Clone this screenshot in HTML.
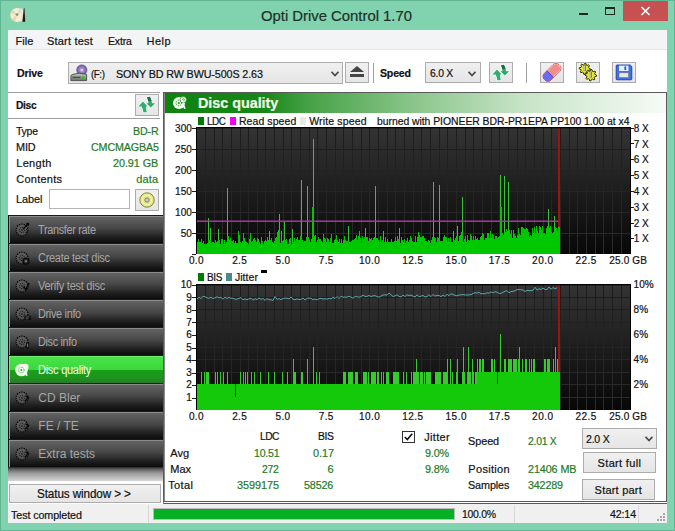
<!DOCTYPE html>
<html><head><meta charset="utf-8">
<style>
*{margin:0;padding:0;box-sizing:border-box}
html,body{width:675px;height:531px;overflow:hidden}
body{position:relative;background:#80d3ae;font-family:"Liberation Sans",sans-serif;font-size:11.5px;color:#111}
.a{position:absolute}
.t{position:absolute;white-space:nowrap;line-height:1;-webkit-text-stroke:0.2px currentColor}
.btn{position:absolute;background:linear-gradient(#f0f0f0,#e5e5e5);border:1px solid #acacac}
.combo{position:absolute;background:linear-gradient(#f0f0f0,#e5e5e5);border:1px solid #acacac}
.nav{position:absolute;left:8px;width:155px;height:28px;border-top:1px solid #1a1a1a;border-left:1px solid #111;
 background:linear-gradient(#8c8c8c 0,#8c8c8c 1px,#636363 1px,#474747 45%,#1e1e1e 80%,#0c0c0c 100%)}
.nav::before{content:"";position:absolute;left:0;top:0;width:1px;height:27px;background:#9a9a9a}
.nav.sel{background:linear-gradient(#6ef06e 0,#6ef06e 1px,#4ae24a 1px,#3cd83c 50%,#1aa01a 50%,#1c961c 80%,#287a28 100%)}
.nav.sel::before{background:#7ae87a}
</style></head><body>
<div class="a" style="left:0;top:0;width:675px;height:531px;border:1px solid #62b592"></div>

<!-- title icon -->
<svg class="a" style="left:0;top:0" width="30" height="26" viewBox="0 0 30 26">
<defs><linearGradient id="wedge" x1="0" y1="0" x2="0" y2="1"><stop offset="0" stop-color="#4a6a58"/><stop offset="0.5" stop-color="#3a2418"/><stop offset="1" stop-color="#1a0a08"/></linearGradient></defs>
<circle cx="17.3" cy="15" r="7" fill="#f6ecd0"/>
<path d="M17.3 15 L10.6 13 A7 7 0 0 1 12.5 9.6 Z M17.3 15 L19.5 8.4 A7 7 0 0 1 23 10.5 Z M17.3 15 L15 21.6 A7 7 0 0 1 11.4 19 Z" fill="#e6d6ac"/>
<path d="M20.2 8.6 L23.4 8.4 L22.6 21.6 L20.4 21.4 Z" fill="#e4e8e4" opacity="0.85"/>
<path d="M23.6 8.2 L24.8 8 L25.2 21.8 L22.4 21.8 L22.9 16 Z" fill="url(#wedge)"/>
<circle cx="17" cy="14.6" r="1.4" fill="#7a9a98"/>
</svg>
<div class="a" style="left:579px;top:13px;width:9px;height:2px;background:#1a2a22"></div>
<div class="a" style="left:605px;top:7px;width:10px;height:8px;border:1px solid #1a2a22;border-top-width:2px"></div>
<div class="a" style="left:623px;top:1px;width:45px;height:20px;background:#c75050"></div>
<svg class="a" style="left:640px;top:6px" width="11" height="10"><path d="M1.5 1 L9.5 9 M9.5 1 L1.5 9" stroke="#fff" stroke-width="1.6"/></svg>

<!-- client -->
<div class="a" style="left:8px;top:30px;width:659px;height:493px;background:#fff"></div>
<div class="a" style="left:8px;top:30px;width:659px;height:20px;background:#f3f4f5;border-bottom:1px solid #e6e6e6"></div>

<!-- toolbar -->
<div class="combo" style="left:68px;top:62px;width:275px;height:22px"></div>
<svg class="a" style="left:66px;top:60px" width="24" height="26" viewBox="66 60 24 26">
<defs><radialGradient id="pd" cx="0.5" cy="0.5" r="0.5"><stop offset="0" stop-color="#f4f0ff"/><stop offset="0.35" stop-color="#a890d0"/><stop offset="1" stop-color="#6a5498"/></radialGradient>
<linearGradient id="drv" x1="0" y1="0" x2="0" y2="1"><stop offset="0" stop-color="#c8ccc8"/><stop offset="1" stop-color="#6a706a"/></linearGradient></defs>
<circle cx="81.8" cy="70" r="5.2" fill="url(#pd)" stroke="#5a4a80" stroke-width="0.5"/>
<path d="M73 74.3 L79 73.2 L86.6 74.3 L86.6 80.6 L70.9 80.6 L70.9 75.5 Z" fill="url(#drv)" stroke="#3a3e3a" stroke-width="0.8"/>
<rect x="72.5" y="76.6" width="8" height="1.6" fill="#505450"/>
<circle cx="83.3" cy="77.4" r="1.5" fill="#30c030"/>
</svg>
<svg class="a" style="left:331px;top:71px" width="8" height="6"><path d="M0.5 0.8 L4 4.5 L7.5 0.8" fill="none" stroke="#4a4a4a" stroke-width="1.8"/></svg>
<div class="btn" style="left:345px;top:62px;width:24px;height:21px"></div>
<svg class="a" style="left:349px;top:65px" width="16" height="14"><path d="M1 7 L8 1 L15 7 Z" fill="#444"/><rect x="1" y="9" width="14" height="3" fill="#444"/></svg>
<div class="a" style="left:373px;top:63px;width:1px;height:20px;background:#a0a0a0"></div>
<div class="combo" style="left:425px;top:62px;width:56px;height:21px"></div>
<svg class="a" style="left:468px;top:71px" width="8" height="6"><path d="M0.5 0.8 L4 4.5 L7.5 0.8" fill="none" stroke="#4a4a4a" stroke-width="1.8"/></svg>
<div class="btn" style="left:489px;top:62px;width:24px;height:21px"></div>
<svg class="a" style="left:489px;top:62px" width="24" height="21" viewBox="489 62 24 21">
<g stroke="#f4fff8" stroke-width="1.4" stroke-linejoin="round" paint-order="stroke">
<path d="M492.4,74.4 L497,69.4 L501.6,74.4 L499.9,74.4 C500.1,76.5 500.5,78.3 500.7,80.3 L497.3,80.3 C497.1,78.2 496.6,76.2 495.6,74.4 Z" fill="#2fae6c"/>
<path d="M500.4,71.2 L502.5,71.2 C502.5,69 501.9,67 500.9,65.4 L503.7,64.7 C505.1,66.6 505.8,69 505.9,71.2 L509.2,71.2 L504.8,75.6 Z" fill="#2fa868"/>
</g>
<path d="M500.9,65.4 L503.7,64.7 C504.6,66 505.2,67.5 505.5,69 L502.4,69.2 C502.2,67.8 501.7,66.5 500.9,65.4Z" fill="#1e6a44"/>
</svg>
<div class="a" style="left:526px;top:63px;width:1px;height:20px;background:#a0a0a0"></div>
<div class="btn" style="left:540px;top:62px;width:24px;height:21px"></div>
<svg class="a" style="left:540px;top:62px" width="24" height="21" viewBox="540 62 24 21">
<g transform="rotate(-45 552 72.4)">
<rect x="541.5" y="67.6" width="21" height="9.6" rx="4.2" fill="#f48a8a" stroke="#fff" stroke-width="1.6"/>
<path d="M545.7,67.6 H549.5 V77.2 H545.7 A4.2 4.2 0 0 1 541.5 73 V71.8 A4.2 4.2 0 0 1 545.7 67.6Z" fill="#6a6af8"/>
<rect x="541.5" y="67.6" width="21" height="9.6" rx="4.2" fill="none" stroke="#c84848" stroke-width="0.8"/>
<path d="M549.5 67.6 V77.2" stroke="#4040b0" stroke-width="0.8"/>
</g>
</svg>
<div class="btn" style="left:576px;top:62px;width:24px;height:21px"></div>
<svg class="a" style="left:576px;top:62px" width="24" height="21" viewBox="576 62 24 21">
<g stroke="#fffff0" stroke-width="1.6" stroke-linejoin="round" paint-order="stroke" fill="none">
<path d="M584.80,63.20 L585.89,63.31 L586.34,65.07 L587.04,65.45 L588.76,64.84 L589.46,65.69 L588.53,67.26 L588.75,68.01 L590.40,68.80 L590.29,69.89 L588.53,70.34 L588.15,71.04 L588.76,72.76 L587.91,73.46 L586.34,72.53 L585.59,72.75 L584.80,74.40 L583.71,74.29 L583.26,72.53 L582.56,72.15 L580.84,72.76 L580.14,71.91 L581.07,70.34 L580.85,69.59 L579.20,68.80 L579.31,67.71 L581.07,67.26 L581.45,66.56 L580.84,64.84 L581.69,64.14 L583.26,65.07 L584.01,64.85Z"/><path d="M590.80,69.40 L591.93,69.51 L592.40,71.34 L593.12,71.73 L594.90,71.10 L595.62,71.98 L594.66,73.60 L594.90,74.39 L596.60,75.20 L596.49,76.33 L594.66,76.80 L594.27,77.52 L594.90,79.30 L594.02,80.02 L592.40,79.06 L591.61,79.30 L590.80,81.00 L589.67,80.89 L589.20,79.06 L588.48,78.67 L586.70,79.30 L585.98,78.42 L586.94,76.80 L586.70,76.01 L585.00,75.20 L585.11,74.07 L586.94,73.60 L587.33,72.88 L586.70,71.10 L587.58,70.38 L589.20,71.34 L589.99,71.10Z"/></g>
<path d="M584.80,63.20 L585.89,63.31 L586.34,65.07 L587.04,65.45 L588.76,64.84 L589.46,65.69 L588.53,67.26 L588.75,68.01 L590.40,68.80 L590.29,69.89 L588.53,70.34 L588.15,71.04 L588.76,72.76 L587.91,73.46 L586.34,72.53 L585.59,72.75 L584.80,74.40 L583.71,74.29 L583.26,72.53 L582.56,72.15 L580.84,72.76 L580.14,71.91 L581.07,70.34 L580.85,69.59 L579.20,68.80 L579.31,67.71 L581.07,67.26 L581.45,66.56 L580.84,64.84 L581.69,64.14 L583.26,65.07 L584.01,64.85Z" fill="#e8e824" stroke="#2a2a08" stroke-width="1" stroke-linejoin="round"/>
<path d="M590.80,69.40 L591.93,69.51 L592.40,71.34 L593.12,71.73 L594.90,71.10 L595.62,71.98 L594.66,73.60 L594.90,74.39 L596.60,75.20 L596.49,76.33 L594.66,76.80 L594.27,77.52 L594.90,79.30 L594.02,80.02 L592.40,79.06 L591.61,79.30 L590.80,81.00 L589.67,80.89 L589.20,79.06 L588.48,78.67 L586.70,79.30 L585.98,78.42 L586.94,76.80 L586.70,76.01 L585.00,75.20 L585.11,74.07 L586.94,73.60 L587.33,72.88 L586.70,71.10 L587.58,70.38 L589.20,71.34 L589.99,71.10Z" fill="#e8e824" stroke="#2a2a08" stroke-width="1" stroke-linejoin="round"/>
<rect x="583.7" y="65" width="2.2" height="6" fill="#7a7a6a"/><rect x="584.2" y="65.5" width="0.8" height="5" fill="#d8d8d0"/>
<rect x="589.8" y="71.6" width="2.2" height="6" fill="#7a7a6a"/><rect x="590.3" y="72.1" width="0.8" height="5" fill="#d8d8d0"/>
</svg>
<div class="btn" style="left:612px;top:62px;width:24px;height:21px"></div>
<svg class="a" style="left:612px;top:62px" width="24" height="21" viewBox="612 62 24 21">
<path d="M616.2,65.6 Q616.2,65 617,65 L630.2,65 L631.8,66.6 L631.8,79 Q631.8,79.8 631,79.8 L617,79.8 Q616.2,79.8 616.2,79 Z" fill="#3c72e4" stroke="#1c3ca8" stroke-width="0.9"/>
<rect x="619" y="65.6" width="9.5" height="5.4" fill="#e6f2ff"/>
<rect x="624.4" y="66.4" width="1.8" height="3.6" fill="#2a5ad0"/>
<rect x="619" y="72.8" width="9.6" height="4.8" fill="#e8e8e8" stroke="#707070" stroke-width="0.6"/>
</svg>
<!-- left panel -->
<div class="a" style="left:8px;top:92px;width:152px;height:1px;background:#a0a0a0"></div>
<div class="a" style="left:8px;top:118px;width:152px;height:1px;background:#a0a0a0"></div>
<div class="btn" style="left:135px;top:94px;width:24px;height:22px"></div>
<svg class="a" style="left:135px;top:94px" width="24" height="21" viewBox="489 62 24 21">
<g stroke="#f4fff8" stroke-width="1.4" stroke-linejoin="round" paint-order="stroke">
<path d="M492.4,74.4 L497,69.4 L501.6,74.4 L499.9,74.4 C500.1,76.5 500.5,78.3 500.7,80.3 L497.3,80.3 C497.1,78.2 496.6,76.2 495.6,74.4 Z" fill="#2fae6c"/>
<path d="M500.4,71.2 L502.5,71.2 C502.5,69 501.9,67 500.9,65.4 L503.7,64.7 C505.1,66.6 505.8,69 505.9,71.2 L509.2,71.2 L504.8,75.6 Z" fill="#2fa868"/>
</g>
<path d="M500.9,65.4 L503.7,64.7 C504.6,66 505.2,67.5 505.5,69 L502.4,69.2 C502.2,67.8 501.7,66.5 500.9,65.4Z" fill="#1e6a44"/>
</svg>
<div class="a" style="left:49px;top:189px;width:81px;height:20px;border:1px solid #b4b4b4;background:#fff"></div>
<div class="btn" style="left:135px;top:189px;width:24px;height:22px"></div>
<svg class="a" style="left:135px;top:189px" width="24" height="22" viewBox="0 0 24 22">
<circle cx="12" cy="11" r="7.2" fill="#e6e68a" stroke="#7a7a30" stroke-width="0.9"/>
<circle cx="12" cy="11" r="4.8" fill="none" stroke="#f8f8c0" stroke-width="1"/>
<circle cx="12" cy="11" r="2.2" fill="#c8c8b8" stroke="#6a6a50" stroke-width="0.7"/>
</svg>
<!-- nav -->
<div class="a" style="left:8px;top:467px;width:155px;height:14px;background:linear-gradient(#262626 0,#5a5a5a 2px,#9a9a9a 6px,#d4d4d4 100%)"></div>
<div class="nav" style="top:215px"></div>
<svg class="a" style="left:12px;top:221px" width="20" height="18" viewBox="0 0 20 18"><circle cx="10" cy="9" r="5.9" fill="#6a6a6a" fill-opacity="0.55" stroke="#080808" stroke-width="1.4" stroke-dasharray="1.3 1.1"/><circle cx="10" cy="9" r="2.6" fill="none" stroke="#101010" stroke-width="1" stroke-dasharray="1.1 0.9"/><circle cx="10" cy="9" r="0.8" fill="#101010"/><path d="M11 8 L16.5 2.5 M14.3 2.6 L16.5 2.5 L16.4 4.7" stroke="#080808" stroke-width="1.3" fill="none"/><path d="M14 9 L16 7 M13.5 12 L15.5 10" stroke="#080808" stroke-width="1"/></svg>
<div class="t" style="left:38.30px;top:224.00px;font-size:12px;color:#a6a6a6;letter-spacing:-0.375px;transform:scaleX(0.9100);transform-origin:0 0;-webkit-text-stroke:0;">Transfer rate</div>
<div class="nav" style="top:243px"></div>
<svg class="a" style="left:12px;top:249px" width="20" height="18" viewBox="0 0 20 18"><circle cx="10" cy="9" r="5.9" fill="#6a6a6a" fill-opacity="0.55" stroke="#080808" stroke-width="1.4" stroke-dasharray="1.3 1.1"/><circle cx="10" cy="9" r="2.6" fill="none" stroke="#101010" stroke-width="1" stroke-dasharray="1.1 0.9"/><circle cx="10" cy="9" r="0.8" fill="#101010"/><circle cx="14" cy="12.2" r="3" fill="#2a2a2a" stroke="#080808" stroke-width="1.2"/><path d="M12.8 12.2 H15.2 M14 11 V13.4" stroke="#8a8a8a" stroke-width="0.8"/></svg>
<div class="t" style="left:38.30px;top:252.00px;font-size:12px;color:#a6a6a6;letter-spacing:-0.329px;transform:scaleX(0.9183);transform-origin:0 0;-webkit-text-stroke:0;">Create test disc</div>
<div class="nav" style="top:271px"></div>
<svg class="a" style="left:12px;top:277px" width="20" height="18" viewBox="0 0 20 18"><circle cx="10" cy="9" r="5.9" fill="#6a6a6a" fill-opacity="0.55" stroke="#080808" stroke-width="1.4" stroke-dasharray="1.3 1.1"/><circle cx="10" cy="9" r="2.6" fill="none" stroke="#101010" stroke-width="1" stroke-dasharray="1.1 0.9"/><circle cx="10" cy="9" r="0.8" fill="#101010"/><path d="M11.5 9.5 L13.8 12.5 L17 6" stroke="#080808" stroke-width="1.5" fill="none"/></svg>
<div class="t" style="left:38.30px;top:280.00px;font-size:12px;color:#a6a6a6;letter-spacing:-0.294px;transform:scaleX(0.9213);transform-origin:0 0;-webkit-text-stroke:0;">Verify test disc</div>
<div class="nav" style="top:299px"></div>
<svg class="a" style="left:12px;top:305px" width="20" height="18" viewBox="0 0 20 18"><circle cx="10" cy="9" r="5.9" fill="#6a6a6a" fill-opacity="0.55" stroke="#080808" stroke-width="1.4" stroke-dasharray="1.3 1.1"/><circle cx="10" cy="9" r="2.6" fill="none" stroke="#101010" stroke-width="1" stroke-dasharray="1.1 0.9"/><circle cx="10" cy="9" r="0.8" fill="#101010"/><rect x="12.4" y="10.6" width="6.4" height="4.4" fill="#080808"/><path d="M13.6 12 H17.6 M13.6 13.8 H16.6" stroke="#8a8a8a" stroke-width="0.7"/></svg>
<div class="t" style="left:38.30px;top:308.00px;font-size:12px;color:#a6a6a6;letter-spacing:-0.365px;transform:scaleX(0.9114);transform-origin:0 0;-webkit-text-stroke:0;">Drive info</div>
<div class="nav" style="top:327px"></div>
<svg class="a" style="left:12px;top:333px" width="20" height="18" viewBox="0 0 20 18"><circle cx="10" cy="9" r="5.9" fill="#6a6a6a" fill-opacity="0.55" stroke="#080808" stroke-width="1.4" stroke-dasharray="1.3 1.1"/><circle cx="10" cy="9" r="2.6" fill="none" stroke="#101010" stroke-width="1" stroke-dasharray="1.1 0.9"/><circle cx="10" cy="9" r="0.8" fill="#101010"/><rect x="14.2" y="9.4" width="2.8" height="6" fill="#080808"/><rect x="15.1" y="10.6" width="1" height="3.6" fill="#8a8a8a"/></svg>
<div class="t" style="left:38.30px;top:336.00px;font-size:12px;color:#a6a6a6;letter-spacing:-0.380px;transform:scaleX(0.9098);transform-origin:0 0;-webkit-text-stroke:0;">Disc info</div>
<div class="nav sel" style="top:355px"></div>
<svg class="a" style="left:12px;top:361px" width="20" height="18" viewBox="0 0 20 18"><circle cx="9.5" cy="9" r="6.3" fill="#f4fff0"/><circle cx="13.4" cy="6" r="3.2" fill="#f4fff0"/><path d="M13.5 9 L15.8 14.6 L14 15 L12 9.5Z" fill="#f4fff0"/><circle cx="9.3" cy="9" r="2.8" fill="none" stroke="#2aa82a" stroke-width="0.9" stroke-dasharray="1.2 0.8"/><circle cx="9.3" cy="9" r="1" fill="#2aa82a"/></svg>
<div class="t" style="left:38.30px;top:364.00px;font-size:12px;color:#f4ffe8;letter-spacing:-0.314px;transform:scaleX(0.9222);transform-origin:0 0;-webkit-text-stroke:0;">Disc quality</div>
<div class="nav" style="top:383px"></div>
<svg class="a" style="left:12px;top:389px" width="20" height="18" viewBox="0 0 20 18"><circle cx="10" cy="9" r="5.9" fill="#6a6a6a" fill-opacity="0.55" stroke="#080808" stroke-width="1.4" stroke-dasharray="1.3 1.1"/><circle cx="10" cy="9" r="2.6" fill="none" stroke="#101010" stroke-width="1" stroke-dasharray="1.1 0.9"/><circle cx="10" cy="9" r="0.8" fill="#101010"/><path d="M12.5 12.5 L17 8 M13.5 6.5 L16.5 9.5" stroke="#080808" stroke-width="1.3"/></svg>
<div class="t" style="left:38.30px;top:392.00px;font-size:12px;color:#a6a6a6;-webkit-text-stroke:0;">CD Bler</div>
<div class="nav" style="top:411px"></div>
<svg class="a" style="left:12px;top:417px" width="20" height="18" viewBox="0 0 20 18"><circle cx="10" cy="9" r="5.9" fill="#6a6a6a" fill-opacity="0.55" stroke="#080808" stroke-width="1.4" stroke-dasharray="1.3 1.1"/><circle cx="10" cy="9" r="2.6" fill="none" stroke="#101010" stroke-width="1" stroke-dasharray="1.1 0.9"/><circle cx="10" cy="9" r="0.8" fill="#101010"/><path d="M12.5 12.5 L17 8 M13.5 6.5 L16.5 9.5" stroke="#080808" stroke-width="1.3"/></svg>
<div class="t" style="left:38.30px;top:420.00px;font-size:12px;color:#a6a6a6;-webkit-text-stroke:0;">FE / TE</div>
<div class="nav" style="top:439px"></div>
<svg class="a" style="left:12px;top:445px" width="20" height="18" viewBox="0 0 20 18"><circle cx="10" cy="9" r="5.9" fill="#6a6a6a" fill-opacity="0.55" stroke="#080808" stroke-width="1.4" stroke-dasharray="1.3 1.1"/><circle cx="10" cy="9" r="2.6" fill="none" stroke="#101010" stroke-width="1" stroke-dasharray="1.1 0.9"/><circle cx="10" cy="9" r="0.8" fill="#101010"/><path d="M12.5 12.5 L17 8 M13.5 6.5 L16.5 9.5" stroke="#080808" stroke-width="1.3"/></svg>
<div class="t" style="left:38.30px;top:448.00px;font-size:12px;color:#a6a6a6;-webkit-text-stroke:0;">Extra tests</div>

<div class="btn" style="left:9px;top:484px;width:152px;height:19px"></div>

<!-- right panel -->
<div class="a" style="left:163px;top:92px;width:504px;height:412px;background:#fff;border-left:1px solid #8a8a8a;border-bottom:1px solid #5a5a5a"></div>
<div class="a" style="left:163px;top:92px;width:504px;height:410px;border-left:1px solid #5a5a5a;border-top:1px solid #5a5a5a;border-right:1px solid #5a5a5a;border-bottom:1px solid #5a5a5a"></div>
<div class="a" style="left:164px;top:93px;width:1px;height:408px;background:#8a8a8a"></div>
<div class="a" style="left:165px;top:93px;width:501px;height:20px;background:linear-gradient(90deg,#0e820f 0%,#168818 20%,#44a044 28%,#8cc68c 50%,#c8e4c8 72%,#f6fbf6 100%)"></div>
<svg class="a" style="left:168px;top:93px" width="24" height="20" viewBox="168 93 24 20">
<circle cx="179" cy="103" r="6" fill="#f4fff0"/>
<circle cx="183.2" cy="99.8" r="3.2" fill="#f4fff0" stroke="#0e820f" stroke-width="0.6"/>
<path d="M183.5 103 L185.8 108.6 L184 109 L182 103.5Z" fill="#f4fff0"/>
<circle cx="178.8" cy="103" r="2.8" fill="none" stroke="#0e820f" stroke-width="0.9" stroke-dasharray="1.2 0.8"/>
<circle cx="178.8" cy="103" r="1" fill="#128a12"/>
<path d="M182 99 L184.5 101 M183 98.3 L185 100" stroke="#0e820f" stroke-width="0.6"/>
</svg>

<svg width="675" height="531" style="position:absolute;left:0;top:0">
<defs>
<linearGradient id="bg1" x1="0" y1="0" x2="0" y2="1"><stop offset="0" stop-color="#343434"/><stop offset="1" stop-color="#070707"/></linearGradient>
<linearGradient id="gr1" gradientUnits="userSpaceOnUse" x1="0" y1="127" x2="0" y2="254"><stop offset="0" stop-color="#1c1c1c"/><stop offset="1" stop-color="#2c2c2c"/></linearGradient>
<linearGradient id="gr2" gradientUnits="userSpaceOnUse" x1="0" y1="284" x2="0" y2="410"><stop offset="0" stop-color="#1c1c1c"/><stop offset="1" stop-color="#2c2c2c"/></linearGradient>
</defs>
<rect x="196" y="127" width="434" height="127" fill="url(#bg1)"/>
<path d="M205.5,127V254M214.5,127V254M222.5,127V254M231.5,127V254M240.5,127V254M248.5,127V254M257.5,127V254M265.5,127V254M274.5,127V254M283.5,127V254M291.5,127V254M300.5,127V254M309.5,127V254M317.5,127V254M326.5,127V254M335.5,127V254M343.5,127V254M352.5,127V254M361.5,127V254M369.5,127V254M378.5,127V254M387.5,127V254M395.5,127V254M404.5,127V254M413.5,127V254M421.5,127V254M430.5,127V254M439.5,127V254M447.5,127V254M456.5,127V254M465.5,127V254M473.5,127V254M482.5,127V254M491.5,127V254M499.5,127V254M508.5,127V254M517.5,127V254M525.5,127V254M534.5,127V254M543.5,127V254M551.5,127V254M560.5,127V254M569.5,127V254M577.5,127V254M586.5,127V254M595.5,127V254M603.5,127V254M612.5,127V254M621.5,127V254M196,233.5H630M196,212.5H630M196,191.5H630M196,170.5H630M196,149.5H630" stroke="url(#gr1)" stroke-width="1" fill="none"/>
<rect x="558" y="127" width="2" height="127" fill="#9a1414"/>
<path d="M196,254V242H198V239H199V242H200V242H201V239H202V243H203V241H204V244H205V244H206V244H207V243H208V240H209V240H210V240H211V243H212V242H213V242H214V243H215V240H216V242H217V241H218V240H219V240H220V244H221V239H222V239H223V244H224V240H225V244H226V242H227V236H228V236H229V240H230V238H231V241H232V241H233V240H234V243H235V241H236V243H237V243H238V231H239V235H240V242H241V243H242V241H243V233H244V238H245V241H246V242H247V243H248V244H249V239H250V233H251V242H252V241H253V239H254V238H255V240H256V242H257V238H258V239H259V242H260V244H261V237H262V241H263V244H264V241H265V240H266V241H267V237H268V240H269V240H270V240H271V238H272V242H273V243H274V241H275V238H276V237H277V232H278V230H279V230H280V243H281V241H282V241H283V240H284V240H285V240H286V239H287V244H288V244H289V239H290V238H291V244H292V242H293V242H294V238H295V241H296V239H297V237H298V240H299V240H300V236H301V236H302V240H303V242H304V241H305V241H306V237H307V237H308V237H309V240H310V242H311V239H312V207H313V207H314V236H315V235H316V242H317V240H318V237H319V239H320V239H321V241H322V242H323V234H324V238H325V239H326V242H327V238H328V239H329V242H330V238H331V234H332V243H333V243H334V240H335V239H336V235H337V240H338V242H339V239H340V243H341V239H342V243H343V240H344V236H345V240H346V241H347V241H348V241H349V242H350V242H351V241H352V240H353V240H354V239H355V238H356V235H357V240H358V236H359V231H360V238H361V243H362V236H363V239H364V237H365V237H366V237H367V237H368V241H369V238H370V239H371V238H372V240H373V238H374V237H375V237H376V238H377V238H378V240H379V242H380V236H381V242H382V240H383V240H384V242H385V237H386V242H387V239H388V242H389V242H390V242H391V239H392V242H393V242H394V241H395V237H396V241H397V236H398V239H399V239H400V243H401V237H402V240H403V242H404V239H405V243H406V241H407V238H408V242H409V240H410V236H411V238H412V241H413V242H414V242H415V236H416V242H417V237H418V232H419V235H420V237H421V237H422V236H423V236H424V238H425V241H426V241H427V242H428V240H429V241H430V243H431V240H432V237H433V237H434V237H435V238H436V242H437V237H438V238H439V238H440V241H441V241H442V241H443V237H444V235H445V237H446V237H447V242H448V238H449V242H450V237H451V242H452V242H453V240H454V240H455V238H456V236H457V236H458V241H459V236H460V235H461V232H462V232H463V242H464V239H465V236H466V242H467V235H468V240H469V241H470V234H471V236H472V240H473V236H474V240H475V236H476V239H477V238H478V240H479V240H480V237H481V236H482V233H483V234H484V240H485V238H486V238H487V233H488V233H489V238H490V231H491V238H492V234H493V235H494V239H495V236H496V236H497V238H498V237H499V236H500V207H501V207H502V233H503V235H504V232H505V232H506V229H507V231H508V230H509V230H510V234H511V230H512V238H513V230H514V234H515V236H516V238H517V235H518V228H519V234H520V235H521V227H522V227H523V228H524V229H525V229H526V228H527V229H528V232H529V237H530V235H531V236H532V228H533V233H534V227H535V233H536V226H537V231H538V233H539V226H540V227H541V230H542V226H543V233H544V233H545V234H546V228H547V226H548V226H549V228H550V226H551V232H552V233H553V232H554V227H555V227H556V228H557V231H558V227H559V227H560V254Z" fill="#00c800"/><path d="M208,240V218H209V240ZM210,240V228H211V240ZM218,240V229H219V240ZM227,236V188H228V236ZM269,240V231H270V240ZM279,230V214H280V230ZM281,241V231H282V241ZM284,240V222H285V240ZM292,242V229H293V242ZM301,236V180H302V236ZM307,237V186H308V237ZM313,207V139H314V207ZM348,241V226H349V241ZM365,237V228H366V237ZM375,237V186H376V237ZM383,240V231H384V240ZM399,239V228H400V239ZM433,237V182H434V237ZM439,238V185H440V238ZM453,240V231H454V240ZM457,236V226H458V236ZM462,232V197H463V232ZM500,207V175H501V207ZM504,232V176H505V232ZM508,230V182H509V230ZM548,226V209H549V226ZM554,227V216H555V227Z" fill="#3cc03c"/>
<rect x="197" y="220.5" width="361" height="1.4" fill="#b038b0"/>
<rect x="196" y="127" width="435" height="1.3" fill="#000"/><rect x="630" y="127" width="1" height="127" fill="#000"/>
<rect x="196" y="127" width="1" height="127" fill="#000"/>

<rect x="196" y="284" width="434" height="126" fill="url(#bg1)"/>
<path d="M205.5,284V410M214.5,284V410M222.5,284V410M231.5,284V410M240.5,284V410M248.5,284V410M257.5,284V410M265.5,284V410M274.5,284V410M283.5,284V410M291.5,284V410M300.5,284V410M309.5,284V410M317.5,284V410M326.5,284V410M335.5,284V410M343.5,284V410M352.5,284V410M361.5,284V410M369.5,284V410M378.5,284V410M387.5,284V410M395.5,284V410M404.5,284V410M413.5,284V410M421.5,284V410M430.5,284V410M439.5,284V410M447.5,284V410M456.5,284V410M465.5,284V410M473.5,284V410M482.5,284V410M491.5,284V410M499.5,284V410M508.5,284V410M517.5,284V410M525.5,284V410M534.5,284V410M543.5,284V410M551.5,284V410M560.5,284V410M569.5,284V410M577.5,284V410M586.5,284V410M595.5,284V410M603.5,284V410M612.5,284V410M621.5,284V410M196,397.5H630M196,384.5H630M196,372.5H630M196,359.5H630M196,347.5H630M196,334.5H630M196,322.5H630M196,309.5H630M196,297.5H630" stroke="url(#gr2)" stroke-width="1" fill="none"/>
<rect x="558" y="284" width="2" height="126" fill="#9a1414"/>
<path d="M196,410V384H198V384H199V384H200V384H201V384H202V384H203V384H204V384H205V384H206V384H207V384H208V384H209V384H210V384H211V384H212V384H213V384H214V384H215V384H216V384H217V384H218V384H219V384H220V384H221V384H222V384H223V384H224V384H225V384H226V384H227V384H228V384H229V384H230V384H231V384H232V384H233V384H234V384H235V397H236V384H237V384H238V384H239V384H240V384H241V384H242V384H243V384H244V384H245V384H246V384H247V384H248V384H249V384H250V384H251V384H252V384H253V384H254V384H255V384H256V384H257V384H258V384H259V384H260V384H261V384H262V384H263V384H264V384H265V384H266V384H267V384H268V384H269V384H270V384H271V384H272V384H273V384H274V384H275V384H276V384H277V384H278V384H279V384H280V384H281V384H282V384H283V384H284V384H285V384H286V384H287V384H288V384H289V384H290V384H291V384H292V384H293V384H294V384H295V384H296V384H297V384H298V384H299V384H300V384H301V384H302V384H303V384H304V384H305V384H306V384H307V384H308V384H309V384H310V384H311V384H312V384H313V384H314V384H315V384H316V384H317V384H318V384H319V384H320V384H321V384H322V384H323V384H324V384H325V384H326V384H327V384H328V384H329V384H330V384H331V384H332V384H333V384H334V384H335V384H336V384H337V384H338V384H339V384H340V384H341V384H342V384H343V384H344V384H345V384H346V384H347V384H348V384H349V384H350V384H351V384H352V384H353V384H354V384H355V384H356V384H357V384H358V384H359V384H360V384H361V384H362V384H363V384H364V384H365V384H366V384H367V384H368V384H369V384H370V384H371V384H372V384H373V384H374V384H375V384H376V384H377V384H378V384H379V384H380V384H381V384H382V384H383V384H384V384H385V384H386V384H387V384H388V384H389V384H390V384H391V384H392V384H393V384H394V384H395V384H396V384H397V384H398V384H399V384H400V384H401V384H402V384H403V384H404V384H405V384H406V384H407V384H408V384H409V384H410V384H411V384H412V384H413V384H414V384H415V384H416V384H417V384H418V384H419V384H420V384H421V384H422V384H423V384H424V384H425V384H426V384H427V384H428V384H429V384H430V384H431V384H432V384H433V384H434V384H435V384H436V384H437V384H438V384H439V384H440V384H441V384H442V384H443V384H444V384H445V384H446V384H447V384H448V384H449V384H450V384H451V384H452V384H453V384H454V384H455V384H456V384H457V384H458V384H459V384H460V384H461V384H462V384H463V384H464V384H465V384H466V384H467V384H468V384H469V384H470V384H471V384H472V384H473V384H474V384H475V384H476V384H477V372H478V372H479V372H480V372H481V372H482V372H483V372H484V372H485V372H486V372H487V372H488V372H489V372H490V372H491V372H492V372H493V372H494V372H495V372H496V372H497V384H498V372H499V372H500V372H501V372H502V372H503V372H504V372H505V372H506V372H507V372H508V372H509V372H510V372H511V372H512V372H513V372H514V372H515V372H516V372H517V372H518V372H519V372H520V372H521V372H522V372H523V372H524V372H525V372H526V372H527V372H528V372H529V372H530V372H531V372H532V372H533V372H534V372H535V372H536V372H537V372H538V372H539V372H540V372H541V372H542V372H543V372H544V372H545V372H546V372H547V372H548V372H549V372H550V372H551V372H552V372H553V372H554V372H555V372H556V372H557V372H558V372H559V372H560V410Z" fill="#14c80a"/><path d="M201,384V372H202V384ZM204,384V372H205V384ZM206,384V372H207V384ZM207,384V372H208V384ZM208,384V372H209V384ZM215,384V372H216V384ZM217,384V372H218V384ZM220,384V372H221V384ZM223,384V372H224V384ZM227,384V372H228V384ZM240,384V372H241V384ZM243,384V372H244V384ZM245,384V372H246V384ZM247,384V372H248V384ZM251,384V372H252V384ZM254,384V372H255V384ZM260,384V372H261V384ZM268,384V372H269V384ZM274,384V372H275V384ZM282,384V372H283V384ZM287,384V372H288V384ZM293,384V359H294V384ZM294,384V372H295V384ZM295,384V372H296V384ZM301,384V372H302V384ZM302,384V372H303V384ZM307,384V359H308V384ZM313,384V347H314V384ZM316,384V372H317V384ZM319,384V372H320V384ZM343,384V372H344V384ZM344,384V372H345V384ZM345,384V372H346V384ZM348,384V372H349V384ZM349,384V372H350V384ZM350,384V372H351V384ZM351,384V372H352V384ZM352,384V372H353V384ZM355,384V372H356V384ZM356,384V372H357V384ZM357,384V372H358V384ZM363,384V372H364V384ZM364,384V372H365V384ZM365,384V372H366V384ZM366,384V372H367V384ZM368,384V372H369V384ZM371,384V372H372V384ZM372,384V372H373V384ZM373,384V372H374V384ZM374,384V372H375V384ZM375,384V372H376V384ZM377,384V372H378V384ZM378,384V372H379V384ZM381,384V372H382V384ZM383,384V372H384V384ZM386,384V372H387V384ZM387,384V372H388V384ZM388,384V372H389V384ZM393,384V372H394V384ZM394,384V372H395V384ZM395,384V372H396V384ZM396,384V372H397V384ZM397,384V372H398V384ZM398,384V372H399V384ZM403,384V372H404V384ZM406,384V372H407V384ZM411,384V372H412V384ZM413,384V372H414V384ZM414,384V372H415V384ZM415,384V372H416V384ZM416,384V359H417V384ZM417,384V372H418V384ZM418,384V372H419V384ZM420,384V372H421V384ZM421,384V372H422V384ZM422,384V372H423V384ZM424,384V372H425V384ZM426,384V372H427V384ZM427,384V372H428V384ZM428,384V372H429V384ZM429,384V372H430V384ZM430,384V372H431V384ZM435,384V372H436V384ZM436,384V372H437V384ZM437,384V372H438V384ZM438,384V372H439V384ZM439,384V372H440V384ZM440,384V372H441V384ZM443,384V372H444V384ZM444,384V372H445V384ZM445,384V372H446V384ZM446,384V372H447V384ZM447,384V359H448V384ZM450,384V359H451V384ZM452,384V372H453V384ZM456,384V372H457V384ZM457,384V359H458V384ZM462,384V372H463V384ZM463,384V347H464V384ZM464,384V372H465V384ZM467,384V372H468V384ZM468,384V347H469V384ZM469,384V372H470V384ZM470,384V372H471V384ZM472,384V359H473V384ZM473,384V372H474V384ZM475,384V372H476V384ZM476,384V372H477V384ZM477,372V359H478V372ZM479,372V359H480V372ZM480,372V359H481V372ZM482,372V359H483V372ZM483,372V359H484V372ZM491,372V359H492V372ZM492,372V359H493V372ZM494,372V359H495V372ZM500,372V334H501V372ZM504,372V359H505V372ZM505,372V359H506V372ZM508,372V359H509V372ZM509,372V359H510V372ZM510,372V359H511V372ZM511,372V359H512V372ZM513,372V359H514V372ZM514,372V359H515V372ZM515,372V359H516V372ZM516,372V359H517V372ZM518,372V359H519V372ZM519,372V347H520V372ZM522,372V359H523V372ZM525,372V359H526V372ZM526,372V359H527V372ZM529,372V359H530V372ZM531,372V359H532V372ZM533,372V359H534V372ZM534,372V359H535V372ZM544,372V359H545V372ZM545,372V359H546V372ZM547,372V359H548V372ZM548,372V359H549V372ZM549,372V359H550V372ZM553,372V359H554V372ZM555,372V347H556V372ZM557,372V359H558V372Z" fill="#38c830"/>
<path d="M197,298.9L199,297.3L201,298.4L203,296.5L205,296.8L207,297.8L209,298.3L211,297.2L213,298.6L215,297.8L217,296.8L219,297.7L221,297.4L223,299.2L225,297.1L227,298.4L229,297.4L231,298.3L233,298.2L235,299.3L237,299.0L239,298.4L241,297.6L243,299.9L245,298.8L247,299.7L249,298.9L251,298.1L253,300.2L255,298.6L257,299.6L259,298.0L261,299.2L263,298.5L265,300.4L267,298.7L269,299.6L271,299.8L273,300.6L275,296.5L277,299.3L279,298.6L281,299.7L283,298.5L285,298.1L287,298.2L289,299.0L291,296.9L293,299.2L295,299.7L297,298.8L299,299.6L301,299.5L303,297.9L305,300.1L307,298.2L309,298.2L311,298.2L313,299.8L315,299.0L317,299.9L319,298.7L321,298.3L323,299.1L325,298.7L327,299.2L329,298.3L331,298.8L333,297.4L335,298.5L337,296.5L339,298.6L341,296.3L343,297.2L345,297.1L347,297.1L349,296.3L351,297.2L353,298.2L355,296.6L357,296.6L359,297.3L361,296.6L363,295.2L365,296.4L367,296.4L369,295.4L371,296.6L373,295.8L375,295.7L377,296.5L379,297.2L381,296.1L383,295.1L385,294.8L387,295.1L389,293.0L391,294.8L393,296.5L395,295.9L397,294.8L399,296.4L401,297.0L403,295.0L405,296.5L407,294.8L409,295.6L411,295.0L413,296.1L415,297.1L417,294.8L419,296.8L421,296.1L423,295.5L425,297.0L427,296.6L429,294.7L431,296.6L433,294.5L435,296.2L437,295.4L439,295.5L441,296.6L443,295.1L445,296.5L447,294.2L449,295.7L451,293.8L453,294.4L455,295.5L457,295.8L459,295.0L461,294.9L463,294.5L465,294.9L467,295.1L469,294.8L471,294.7L473,293.5L475,292.7L477,293.1L479,292.3L481,293.8L483,293.6L485,293.9L487,292.7L489,293.2L491,291.8L493,292.9L495,291.7L497,292.2L499,293.4L501,293.3L503,292.3L505,291.4L507,290.6L509,292.9L511,291.5L513,291.4L515,290.7L517,289.7L519,289.5L521,289.8L523,289.9L525,291.5L527,290.4L529,290.7L531,290.6L533,290.5L535,287.2L537,290.1L539,288.7L541,289.5L543,288.0L545,289.5L547,289.6L549,286.9L551,289.2L553,287.6L555,288.6L557,287.9" fill="none" stroke="#5aa4aa" stroke-width="1"/>
<rect x="196" y="284" width="435" height="1.3" fill="#000"/><rect x="630" y="284" width="1" height="126" fill="#000"/>
<rect x="196" y="284" width="1" height="126" fill="#000"/>

<path d="M192,254.5H196M192,233.5H196M192,212.5H196M192,191.5H196M192,170.5H196M192,149.5H196M192,128.5H196M631,238.5H634M631,223.5H634M631,207.5H634M631,191.5H634M631,175.5H634M631,159.5H634M631,143.5H634M631,128.5H634M192,398.5H196M192,385.5H196M192,373.5H196M192,360.5H196M192,348.5H196M192,335.5H196M192,322.5H196M192,310.5H196M192,297.5H196M192,285.5H196" stroke="#1a1a2a" stroke-width="1" fill="none"/>
</svg>

<!-- legend squares -->
<div class="a" style="left:198px;top:117px;width:6px;height:8px;background:#007a00"></div>
<div class="a" style="left:230px;top:117px;width:6px;height:8px;background:#f000f0"></div>
<div class="a" style="left:300px;top:117px;width:6px;height:8px;background:#e8e8e8"></div>
<div class="a" style="left:198px;top:273px;width:6px;height:8px;background:#007a00"></div>
<div class="a" style="left:226px;top:273px;width:6px;height:8px;background:#4a8a8a"></div>
<div class="a" style="left:261px;top:269.5px;width:6px;height:3px;background:#000"></div>

<!-- stats controls -->
<div class="a" style="left:402px;top:431px;width:13px;height:12px;border:1px solid #333;background:#fff"></div>
<svg class="a" style="left:404px;top:433px" width="9" height="8"><path d="M0.8 4 L3.3 6.6 L8.2 0.8" fill="none" stroke="#111" stroke-width="1.6"/></svg>
<div class="combo" style="left:582px;top:428px;width:75px;height:21px"></div>
<svg class="a" style="left:645px;top:436px" width="8" height="6"><path d="M0.5 0.8 L4 4.5 L7.5 0.8" fill="none" stroke="#4a4a4a" stroke-width="1.8"/></svg>
<div class="btn" style="left:583px;top:452px;width:73px;height:21px"></div>
<div class="btn" style="left:582px;top:479px;width:73px;height:21px"></div>

<!-- status bar -->
<div class="a" style="left:8px;top:504px;width:659px;height:19px;background:#f0f0f0"></div>
<div class="a" style="left:148px;top:505px;width:1px;height:18px;background:#d8d8d8"></div>
<div class="a" style="left:153px;top:508px;width:302px;height:12px;background:#06b025;border:1px solid #bcbcbc"></div>
<div class="a" style="left:514px;top:505px;width:1px;height:18px;background:#d8d8d8"></div>
<div class="a" style="left:638px;top:505px;width:1px;height:18px;background:#d8d8d8"></div>
<svg class="a" style="left:655px;top:511px" width="11" height="11"><g fill="#a8a8a8"><rect x="8" y="2" width="2" height="2"/><rect x="5" y="5" width="2" height="2"/><rect x="8" y="5" width="2" height="2"/><rect x="2" y="8" width="2" height="2"/><rect x="5" y="8" width="2" height="2"/><rect x="8" y="8" width="2" height="2"/></g></svg>

<div class="t" style="left:261.20px;top:8.00px;font-size:15px;color:#1f2f28;letter-spacing:-0.029px;transform:scaleX(0.9937);transform-origin:0 0;">Opti Drive Control 1.70</div>
<div class="t" style="left:15.60px;top:36.00px;font-size:11px;color:#111;letter-spacing:-0.016px;">File</div>
<div class="t" style="left:47.00px;top:36.00px;font-size:11px;color:#111;letter-spacing:0.204px;">Start test</div>
<div class="t" style="left:107.50px;top:36.00px;font-size:11px;color:#111;letter-spacing:-0.187px;transform:scaleX(0.9582);transform-origin:0 0;">Extra</div>
<div class="t" style="left:146.50px;top:36.00px;font-size:11px;color:#111;letter-spacing:0.458px;">Help</div>
<div class="t" style="left:16.80px;top:68.00px;font-size:11px;color:#111;font-weight:bold;letter-spacing:-0.158px;transform:scaleX(0.9666);transform-origin:0 0;">Drive</div>
<div class="t" style="left:91.10px;top:69.00px;font-size:11px;color:#111;letter-spacing:-0.480px;transform:scaleX(0.8879);transform-origin:0 0;">(F:)</div>
<div class="t" style="left:115.80px;top:69.00px;font-size:11px;color:#111;letter-spacing:-0.109px;transform:scaleX(0.9761);transform-origin:0 0;">SONY BD RW BWU-500S 2.63</div>
<div class="t" style="left:380.20px;top:68.00px;font-size:11px;color:#111;font-weight:bold;letter-spacing:-0.211px;transform:scaleX(0.9631);transform-origin:0 0;">Speed</div>
<div class="t" style="left:429.60px;top:68.00px;font-size:11px;color:#111;letter-spacing:-0.256px;transform:scaleX(0.9436);transform-origin:0 0;">6.0 X</div>
<div class="t" style="left:16.30px;top:100.00px;font-size:11px;color:#111;font-weight:bold;letter-spacing:-0.379px;transform:scaleX(0.9316);transform-origin:0 0;">Disc</div>
<div class="t" style="left:16.30px;top:126.00px;font-size:11px;color:#111;letter-spacing:-0.260px;transform:scaleX(0.9532);transform-origin:0 0;">Type</div>
<div class="t" style="left:16.30px;top:142.00px;font-size:11px;color:#111;letter-spacing:-0.093px;transform:scaleX(0.9864);transform-origin:0 0;">MID</div>
<div class="t" style="left:16.30px;top:158.00px;font-size:11px;color:#111;letter-spacing:0.283px;">Length</div>
<div class="t" style="left:16.30px;top:174.00px;font-size:11px;color:#111;letter-spacing:0.234px;">Contents</div>
<div class="t" style="left:132.60px;top:126.00px;font-size:11px;color:#1f7a26;letter-spacing:-0.175px;transform:scaleX(0.9715);transform-origin:0 0;">BD-R</div>
<div class="t" style="left:90.50px;top:142.00px;font-size:11px;color:#1f7a26;letter-spacing:-0.149px;transform:scaleX(0.9754);transform-origin:0 0;">CMCMAGBA5</div>
<div class="t" style="left:113.00px;top:158.00px;font-size:11px;color:#1f7a26;letter-spacing:-0.071px;transform:scaleX(0.9841);transform-origin:0 0;">20.91 GB</div>
<div class="t" style="left:136.20px;top:174.00px;font-size:11px;color:#1f7a26;letter-spacing:0.188px;">data</div>
<div class="t" style="left:16.30px;top:194.00px;font-size:11px;color:#111;letter-spacing:-0.044px;transform:scaleX(0.9903);transform-origin:0 0;">Label</div>
<div class="t" style="left:259.70px;top:431.00px;font-size:11px;color:#111;letter-spacing:-0.560px;transform:scaleX(0.9291);transform-origin:0 0;">LDC</div>
<div class="t" style="left:317.50px;top:431.00px;font-size:11px;color:#111;letter-spacing:-0.372px;transform:scaleX(0.9408);transform-origin:0 0;">BIS</div>
<div class="t" style="left:170.30px;top:448.00px;font-size:11px;color:#111;letter-spacing:-0.013px;">Avg</div>
<div class="t" style="left:170.30px;top:464.00px;font-size:11px;color:#111;">Max</div>
<div class="t" style="left:168.20px;top:480.00px;font-size:11px;color:#111;letter-spacing:0.388px;">Total</div>
<div class="t" style="left:253.50px;top:448.00px;font-size:11px;color:#1f7a26;letter-spacing:-0.205px;transform:scaleX(0.9573);transform-origin:0 0;">10.51</div>
<div class="t" style="left:262.30px;top:464.00px;font-size:11px;color:#1f7a26;letter-spacing:-0.332px;transform:scaleX(0.9486);transform-origin:0 0;">272</div>
<div class="t" style="left:237.10px;top:480.00px;font-size:11px;color:#1f7a26;letter-spacing:-0.059px;transform:scaleX(0.9878);transform-origin:0 0;">3599175</div>
<div class="t" style="left:312.50px;top:448.00px;font-size:11px;color:#1f7a26;letter-spacing:-0.059px;transform:scaleX(0.9878);transform-origin:0 0;">0.17</div>
<div class="t" style="left:327.38px;top:464.00px;font-size:11px;color:#1f7a26;">6</div>
<div class="t" style="left:304.20px;top:480.00px;font-size:11px;color:#1f7a26;letter-spacing:-0.136px;transform:scaleX(0.9740);transform-origin:0 0;">58526</div>
<div class="t" style="left:424.30px;top:432.00px;font-size:11px;color:#111;letter-spacing:0.311px;">Jitter</div>
<div class="t" style="left:424.90px;top:448.00px;font-size:11px;color:#1f7a26;letter-spacing:-0.122px;transform:scaleX(0.9786);transform-origin:0 0;">9.0%</div>
<div class="t" style="left:424.90px;top:464.00px;font-size:11px;color:#1f7a26;letter-spacing:-0.122px;transform:scaleX(0.9786);transform-origin:0 0;">9.8%</div>
<div class="t" style="left:468.30px;top:436.00px;font-size:11px;color:#111;letter-spacing:-0.065px;transform:scaleX(0.9879);transform-origin:0 0;">Speed</div>
<div class="t" style="left:527.50px;top:436.00px;font-size:11px;color:#1f7a26;letter-spacing:-0.258px;transform:scaleX(0.9426);transform-origin:0 0;">2.01 X</div>
<div class="t" style="left:468.30px;top:464.00px;font-size:11px;color:#111;letter-spacing:0.321px;">Position</div>
<div class="t" style="left:527.50px;top:464.00px;font-size:11px;color:#1f7a26;letter-spacing:-0.098px;transform:scaleX(0.9798);transform-origin:0 0;">21406 MB</div>
<div class="t" style="left:468.30px;top:480.00px;font-size:11px;color:#111;letter-spacing:-0.096px;transform:scaleX(0.9802);transform-origin:0 0;">Samples</div>
<div class="t" style="left:527.50px;top:480.00px;font-size:11px;color:#1f7a26;letter-spacing:-0.144px;transform:scaleX(0.9714);transform-origin:0 0;">342289</div>
<div class="t" style="left:586.30px;top:434.00px;font-size:11px;color:#111;letter-spacing:-0.212px;transform:scaleX(0.9529);transform-origin:0 0;">2.0 X</div>
<div class="t" style="left:597.60px;top:458.00px;font-size:11px;color:#111;letter-spacing:0.325px;">Start full</div>
<div class="t" style="left:594.60px;top:485.00px;font-size:11px;color:#111;letter-spacing:0.213px;">Start part</div>
<div class="t" style="left:37.40px;top:488.00px;font-size:12px;color:#111;letter-spacing:-0.106px;transform:scaleX(0.9746);transform-origin:0 0;">Status window &gt; &gt;</div>
<div class="t" style="left:10.70px;top:510.00px;font-size:11px;color:#111;letter-spacing:-0.096px;transform:scaleX(0.9754);transform-origin:0 0;">Test completed</div>
<div class="t" style="left:461.60px;top:509.00px;font-size:11px;color:#111;letter-spacing:-0.274px;transform:scaleX(0.9479);transform-origin:0 0;">100.0%</div>
<div class="t" style="left:609.70px;top:509.00px;font-size:11px;color:#111;letter-spacing:-0.151px;transform:scaleX(0.9682);transform-origin:0 0;">42:14</div>
<div class="t" style="left:198.40px;top:96.00px;font-size:14.5px;color:#f2f8e6;font-weight:bold;letter-spacing:-0.040px;transform:scaleX(0.9920);transform-origin:0 0;">Disc quality</div>
<div class="t" style="left:207.40px;top:116.00px;font-size:10.5px;color:#111;letter-spacing:-0.424px;transform:scaleX(0.9429);transform-origin:0 0;">LDC</div>
<div class="t" style="left:238.90px;top:116.00px;font-size:10.5px;color:#111;letter-spacing:0.083px;">Read speed</div>
<div class="t" style="left:309.20px;top:116.00px;font-size:10.5px;color:#111;letter-spacing:0.154px;">Write speed</div>
<div class="t" style="left:376.50px;top:116.00px;font-size:10.5px;color:#111;letter-spacing:-0.036px;transform:scaleX(0.9903);transform-origin:0 0;">burned with PIONEER BDR-PR1EPA PP100 1.00 at x4</div>
<div class="t" style="left:207.30px;top:272.00px;font-size:10.5px;color:#111;letter-spacing:-0.299px;transform:scaleX(0.9496);transform-origin:0 0;">BIS</div>
<div class="t" style="left:234.90px;top:272.00px;font-size:10.5px;color:#111;letter-spacing:0.047px;">Jitter</div>
<div class="t" style="left:188.90px;top:256.00px;font-size:10px;color:#111;letter-spacing:0.347px;">0.0</div>
<div class="t" style="left:188.90px;top:412.00px;font-size:10px;color:#111;letter-spacing:0.347px;">0.0</div>
<div class="t" style="left:232.20px;top:256.00px;font-size:10px;color:#111;letter-spacing:0.347px;">2.5</div>
<div class="t" style="left:232.20px;top:412.00px;font-size:10px;color:#111;letter-spacing:0.347px;">2.5</div>
<div class="t" style="left:275.50px;top:256.00px;font-size:10px;color:#111;letter-spacing:0.347px;">5.0</div>
<div class="t" style="left:275.50px;top:412.00px;font-size:10px;color:#111;letter-spacing:0.347px;">5.0</div>
<div class="t" style="left:318.80px;top:256.00px;font-size:10px;color:#111;letter-spacing:0.347px;">7.5</div>
<div class="t" style="left:318.80px;top:412.00px;font-size:10px;color:#111;letter-spacing:0.347px;">7.5</div>
<div class="t" style="left:358.90px;top:256.00px;font-size:10px;color:#111;letter-spacing:0.510px;">10.0</div>
<div class="t" style="left:358.90px;top:412.00px;font-size:10px;color:#111;letter-spacing:0.510px;">10.0</div>
<div class="t" style="left:402.20px;top:256.00px;font-size:10px;color:#111;letter-spacing:0.510px;">12.5</div>
<div class="t" style="left:402.20px;top:412.00px;font-size:10px;color:#111;letter-spacing:0.510px;">12.5</div>
<div class="t" style="left:445.50px;top:256.00px;font-size:10px;color:#111;letter-spacing:0.510px;">15.0</div>
<div class="t" style="left:445.50px;top:412.00px;font-size:10px;color:#111;letter-spacing:0.510px;">15.0</div>
<div class="t" style="left:488.80px;top:256.00px;font-size:10px;color:#111;letter-spacing:0.510px;">17.5</div>
<div class="t" style="left:488.80px;top:412.00px;font-size:10px;color:#111;letter-spacing:0.510px;">17.5</div>
<div class="t" style="left:532.10px;top:256.00px;font-size:10px;color:#111;letter-spacing:0.510px;">20.0</div>
<div class="t" style="left:532.10px;top:412.00px;font-size:10px;color:#111;letter-spacing:0.510px;">20.0</div>
<div class="t" style="left:575.40px;top:256.00px;font-size:10px;color:#111;letter-spacing:0.510px;">22.5</div>
<div class="t" style="left:575.40px;top:412.00px;font-size:10px;color:#111;letter-spacing:0.510px;">22.5</div>
<div class="t" style="left:609.20px;top:256.00px;font-size:10px;color:#111;letter-spacing:0.183px;">25.0 GB</div>
<div class="t" style="left:609.20px;top:412.00px;font-size:10px;color:#111;letter-spacing:0.183px;">25.0 GB</div>
<div class="t" style="left:180.68px;top:229.00px;font-size:10px;color:#111;">50</div>
<div class="t" style="left:175.11px;top:208.00px;font-size:10px;color:#111;">100</div>
<div class="t" style="left:175.11px;top:187.00px;font-size:10px;color:#111;">150</div>
<div class="t" style="left:175.11px;top:166.00px;font-size:10px;color:#111;">200</div>
<div class="t" style="left:175.11px;top:145.00px;font-size:10px;color:#111;">250</div>
<div class="t" style="left:175.11px;top:124.00px;font-size:10px;color:#111;">300</div>
<div class="t" style="left:633.70px;top:234.00px;font-size:10px;color:#111;">1 X</div>
<div class="t" style="left:633.70px;top:219.00px;font-size:10px;color:#111;">2 X</div>
<div class="t" style="left:633.70px;top:203.00px;font-size:10px;color:#111;">3 X</div>
<div class="t" style="left:633.70px;top:187.00px;font-size:10px;color:#111;">4 X</div>
<div class="t" style="left:633.70px;top:171.00px;font-size:10px;color:#111;">5 X</div>
<div class="t" style="left:633.70px;top:155.00px;font-size:10px;color:#111;">6 X</div>
<div class="t" style="left:633.70px;top:140.00px;font-size:10px;color:#111;">7 X</div>
<div class="t" style="left:633.70px;top:124.00px;font-size:10px;color:#111;">8 X</div>
<div class="t" style="left:186.24px;top:393.00px;font-size:10px;color:#111;">1</div>
<div class="t" style="left:186.24px;top:380.00px;font-size:10px;color:#111;">2</div>
<div class="t" style="left:186.24px;top:368.00px;font-size:10px;color:#111;">3</div>
<div class="t" style="left:186.24px;top:355.00px;font-size:10px;color:#111;">4</div>
<div class="t" style="left:186.24px;top:343.00px;font-size:10px;color:#111;">5</div>
<div class="t" style="left:186.24px;top:330.00px;font-size:10px;color:#111;">6</div>
<div class="t" style="left:186.24px;top:318.00px;font-size:10px;color:#111;">7</div>
<div class="t" style="left:186.24px;top:305.00px;font-size:10px;color:#111;">8</div>
<div class="t" style="left:186.24px;top:293.00px;font-size:10px;color:#111;">9</div>
<div class="t" style="left:180.68px;top:280.00px;font-size:10px;color:#111;">10</div>
<div class="t" style="left:633.60px;top:380.00px;font-size:10px;color:#111;">2%</div>
<div class="t" style="left:633.60px;top:355.00px;font-size:10px;color:#111;">4%</div>
<div class="t" style="left:633.60px;top:330.00px;font-size:10px;color:#111;">6%</div>
<div class="t" style="left:633.60px;top:305.00px;font-size:10px;color:#111;">8%</div>
<div class="t" style="left:633.60px;top:280.00px;font-size:10px;color:#111;">10%</div>

</body></html>
